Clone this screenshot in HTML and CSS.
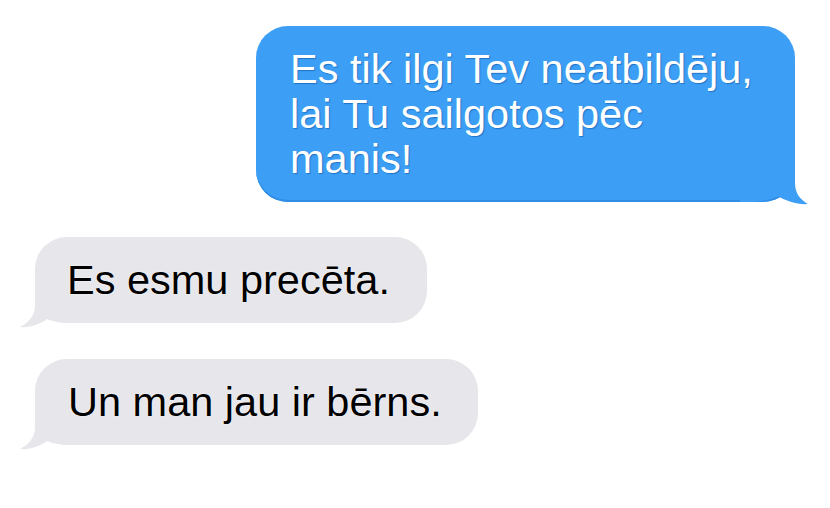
FILE: index.html
```html
<!DOCTYPE html>
<html lang="lv">
<head>
<meta charset="utf-8">
<title>Ziņas</title>
<link rel="stylesheet" href="styles.css">
</head>
<body>
<main class="chat">
  <div class="row row-out">
    <div class="bubble bubble-out">
      Es tik ilgi Tev neatbildēju,<br>lai Tu sailgotos pēc<br>manis!
      <svg class="tail tail-out" width="70" height="42" viewBox="0 0 70 42" aria-hidden="true">
        <path d="M55 0 L55 18 C55 29 61 35 68 39 C58 40 46 36 38 31 C32 34 22 37 10 37 L0 37 L0 0 Z"/>
      </svg>
    </div>
  </div>
  <div class="row row-in">
    <div class="bubble bubble-in bubble-in-1">
      Es esmu precēta.
      <svg class="tail tail-in" width="64" height="42" viewBox="0 0 64 42" aria-hidden="true">
        <path d="M17 0 L17 18 C17 28 10 35 2 39 C12 40 22 36 29 31 C36 34 44 35 55 35 L64 35 L64 0 Z"/>
      </svg>
    </div>
  </div>
  <div class="row row-in">
    <div class="bubble bubble-in bubble-in-2">
      Un man jau ir bērns.
      <svg class="tail tail-in" width="64" height="42" viewBox="0 0 64 42" aria-hidden="true">
        <path d="M17 0 L17 18 C17 28 10 35 2 39 C12 40 22 36 29 31 C36 34 44 35 55 35 L64 35 L64 0 Z"/>
      </svg>
    </div>
  </div>
</main>
</body>
</html>
```

FILE: styles.css
```css
html, body {
  margin: 0;
  padding: 0;
  background: #ffffff;
}

.chat {
  width: 830px;
  height: 508px;
  box-sizing: border-box;
  padding: 26px 35px 0 35px;
  display: flex;
  flex-direction: column;
  gap: 35px;
  font-family: "Liberation Sans", Arial, Helvetica, sans-serif;
  font-size: 41.5px;
  line-height: 45px;
}

.row {
  display: flex;
}

.row-out {
  justify-content: flex-end;
}

.row-in {
  justify-content: flex-start;
}

.row-in + .row-in {
  margin-top: 1px;
}

.bubble {
  position: relative;
  z-index: 0;
  box-sizing: border-box;
  border-radius: 32px;
  white-space: nowrap;
}

.bubble-out {
  width: 539px;
  padding: 20px 36px 21px 34px;
  background: #3c9ff5;
  color: #ffffff;
  text-shadow: 1px 1px 1px rgba(10, 80, 160, 0.55);
  box-shadow: inset 0 -2px 0 #2f8de6;
}

.bubble-in {
  padding: 20px 30px 21px 32px;
  background: #e6e6eb;
  color: #000000;
  text-shadow: 0 0 2px #ffffff;
}

.bubble-in-1 {
  width: 392px;
}

.bubble-in-2 {
  width: 443px;
  padding-left: 33px;
}

.tail {
  position: absolute;
  z-index: -1;
  display: block;
}

.tail-out {
  left: 484px;
  top: 139px;
  fill: #3c9ff5;
}

.tail-in {
  left: -17px;
  top: 51px;
  fill: #e6e6eb;
}
```
